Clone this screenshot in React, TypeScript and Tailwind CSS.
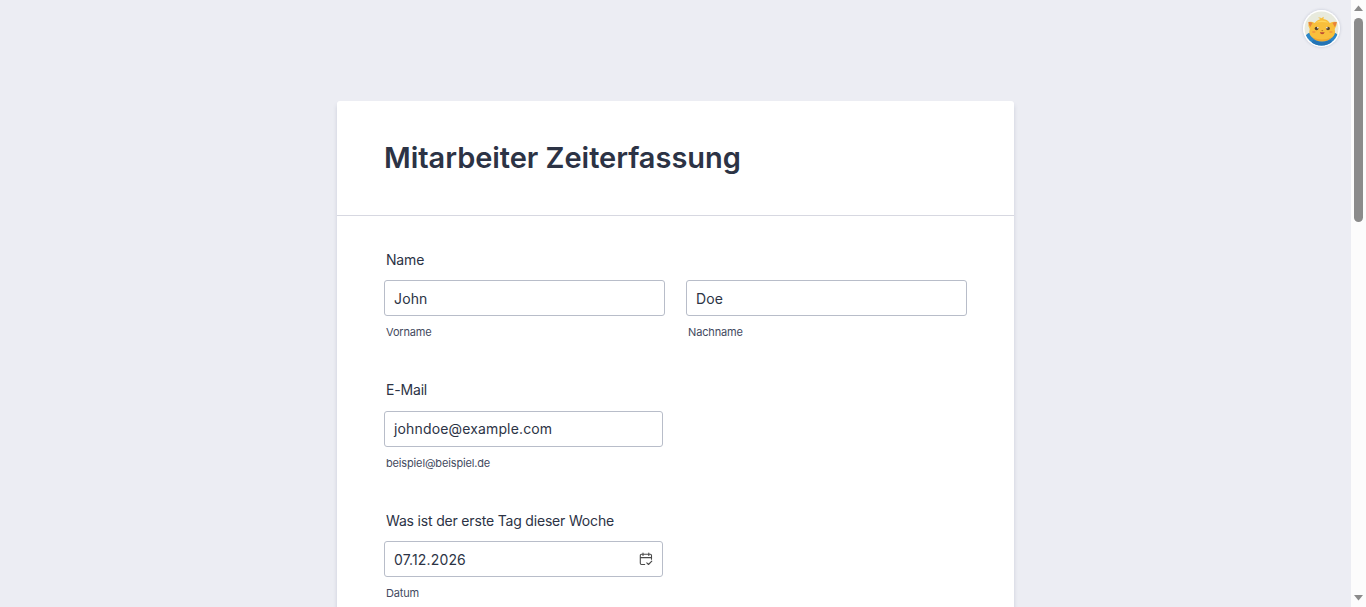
import React from "react";

type InputProps = {
  value: string;
  label: string;
  width: string;
  valueClass?: string;
  children?: React.ReactNode;
};

function TextField({ value, label, width, valueClass = "pt-[2px]", children }: InputProps) {
  return (
    <div className={width}>
      <div className="flex h-9 items-center justify-between rounded-[3px] border border-[#b8bdc9] bg-white pl-[9px] pr-[9px]">
        <span className={`text-[14px] leading-5 tracking-[0.15px] whitespace-nowrap ${valueClass}`}>{value}</span>
        {children}
      </div>
      <div className="mt-2 pl-[2px] text-[11px] leading-4 tracking-[-0.15px] whitespace-nowrap text-[#434a60]">
        {label}
      </div>
    </div>
  );
}

function Label({ children }: { children: React.ReactNode }) {
  return <div className="pl-[2px] text-[14px] leading-5 tracking-[-0.18px]">{children}</div>;
}

function CalendarIcon() {
  return (
    <svg width="14" height="14" viewBox="0 0 14 14" fill="none" stroke="#4a4a4a" strokeWidth="1.1" strokeLinecap="round">
      <path d="M12.5 7.2V3.5a1.2 1.2 0 0 0-1.2-1.2H2.5a1.2 1.2 0 0 0-1.2 1.2v7.8a1.2 1.2 0 0 0 1.2 1.2h3.2" />
      <path d="M1.5 5.6h11M4 1v2.4M9.8 1v2.4" />
      <path d="m7.8 10.8 1.7 1.7 3.3-3.4" strokeLinejoin="round" />
    </svg>
  );
}

function Avatar() {
  return (
    <div className="absolute top-[10px] right-[11px] rounded-full shadow-[0_0_3px_rgba(60,70,110,0.25)]">
      <svg width="37" height="37" viewBox="0 0 37 37">
        <defs>
          <clipPath id="face">
            <circle cx="18.5" cy="18.5" r="17" />
          </clipPath>
        </defs>
        <circle cx="18.5" cy="18.5" r="18.5" fill="#fff" />
        <circle cx="18.5" cy="18.5" r="17" fill="#e8eadd" />
        <g clipPath="url(#face)">
          <path d="M2 27q1.500-4 5.500-4.500l11.500 6 11.500-6q4 .5 5.500 4.500v10H2z" fill="#2b86c8" />
          <path d="M10 30l9 2.200 9-2.200 3 7H7z" fill="#2474b5" />
          <path d="M5.500 12q3.500-.8 6 1Q14 9.800 17.500 9q-1.500-1-2.500-1.200 2-.5 3.700.4.500-1 2-1.500 0 1.300-.3 2.200 4.300.6 6.400 4.100 3.700-2 7-1 0 4-2.100 7 1.300 5.500-2.500 8.500-3.900 3-9.900 3t-10.100-3q-4-3-2.500-8.500-1.900-3-1.200-7z" fill="#f8bf3b" />
          <path d="M5.500 12q2.500-.5 4 1-1.300 1.800-2 4-1.900-2-2-5zM33.800 12q-2.600-.5-4.300 1 1.300 1.800 2.100 4 1.900-2 2.200-5z" fill="#e8833b" />
          <path d="M12.500 12.500q6.500-4 13 0-6.500-1-13 0z" fill="#ffd65b" />
          <path d="M9.500 27.500q9.500 4 19 0-3 4-9.500 4t-9.500-4z" fill="#f0a92f" />
        </g>
        <ellipse cx="13.600" cy="18.500" rx="1.900" ry="1.800" fill="#51412d" />
        <ellipse cx="25" cy="18.500" rx="1.900" ry="1.800" fill="#51412d" />
        <circle cx="14.800" cy="17.700" r=".8" fill="#fff" />
        <circle cx="23.900" cy="17.700" r=".8" fill="#fff" />
        <ellipse cx="10.800" cy="22" rx="1.800" ry="1" fill="#f39b3e" />
        <ellipse cx="27.900" cy="22" rx="1.800" ry="1" fill="#f39b3e" />
        <path d="M16.900 21.900q2.400.8 4.700 0-.4 2.300-2.400 2.300t-2.300-2.300z" fill="#bd4c35" />
        <path d="M18.200 20.200h2.200l-1.100 1z" fill="#9c5527" />
      </svg>
    </div>
  );
}

function Scrollbar() {
  return (
    <div className="flex w-[15px] shrink-0 flex-col items-center bg-[#fcfcfc]">
      <svg width="15" height="18" viewBox="0 0 15 18" fill="#8b8b8b">
        <path d="M7.500 5.500l4.500 5.500H3z" />
      </svg>
      <div className="h-[204px] w-[9px] rounded-full bg-[#8b8b8b]" />
      <svg className="mt-auto" width="15" height="18" viewBox="0 0 15 18" fill="#8b8b8b">
        <path d="M7.500 11.500L3 6h9z" />
      </svg>
    </div>
  );
}

export default function App() {
  return (
    <div className="flex h-[607px] w-[1366px] overflow-hidden bg-[#ecedf3] font-['Inter',sans-serif] text-[#2c3345]">
      <main className="relative flex flex-1 justify-center pt-[101px]">
        <Avatar />
        <form className="h-[700px] w-[677px] rounded-t-[3px] bg-white shadow-[0_4px_4px_rgba(87,100,126,0.21)]">
          <header className="h-[115px] border-b border-[#d7d8e1] pl-[47px] pt-[38px]">
            <h1 className="text-[29px] leading-[38px] font-semibold tracking-[-0.04px] whitespace-nowrap">
              Mitarbeiter Zeiterfassung
            </h1>
          </header>
          <div className="flex flex-col gap-10 px-[47px] pt-[34px]">
            <section className="flex flex-col gap-[10px]">
              <Label>Name</Label>
              <div className="flex gap-[21px]">
                <TextField value="John" label="Vorname" width="w-[281px]" />
                <TextField value="Doe" label="Nachname" width="w-[281px]" />
              </div>
            </section>
            <section className="flex flex-col gap-[11px]">
              <Label>E-Mail</Label>
              <TextField value="johndoe@example.com" label="beispiel@beispiel.de" width="w-[279px]" valueClass="pt-0" />
            </section>
            <section className="flex flex-col gap-[10px]">
              <Label>Was ist der erste Tag dieser Woche</Label>
              <TextField value="07.12.2026" label="Datum" width="w-[279px]">
                <CalendarIcon />
              </TextField>
            </section>
          </div>
        </form>
      </main>
      <Scrollbar />
    </div>
  );
}
